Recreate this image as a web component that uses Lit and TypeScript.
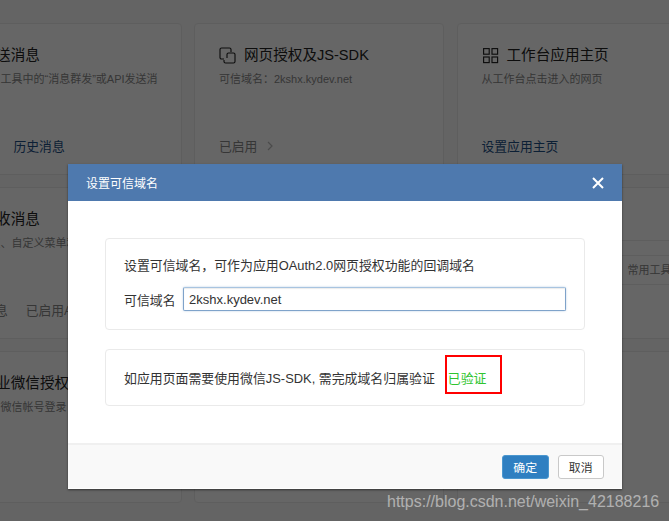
import { LitElement, html, css } from "lit";
import { customElement } from "lit/decorators.js";

const FONT = `"Liberation Sans", "Noto Sans CJK SC", sans-serif`;
const COMMA = "\uFF0C";
const COLON = "\uFF1A";

const iconLayers = html`<svg class="ico" viewBox="0 0 17 17" fill="none" stroke="currentColor" stroke-width="1.15">
  <path d="M5 12H2.500A1.500 1.500 0 0 1 1 10.500V2.500A1.500 1.500 0 0 1 2.500 1h8A1.500 1.500 0 0 1 12 2.500V5"/>
  <path d="M8 11V7.500A1.500 1.500 0 0 1 9.500 6h5A1.500 1.500 0 0 1 16 7.500v7a1.500 1.500 0 0 1-1.500 1.500h-8A1.500 1.500 0 0 1 5 14.500V13"/>
</svg>`;
const iconGrid = html`<svg class="ico" viewBox="0 0 17 17" fill="none" stroke="currentColor" stroke-width="1.15">
  <rect x="1.6" y="1.6" width="5.6" height="5.6"/><rect x="10" y="1.6" width="5.6" height="5.6"/>
  <rect x="1.6" y="10" width="5.6" height="5.6"/><rect x="10" y="10" width="5.6" height="5.6"/>
</svg>`;

@customElement("app-root")
export class AppRoot extends LitElement {
  static styles = css`
    :host { display: block; position: relative; width: 100%; height: 100vh; overflow: hidden; font-family: ${css([FONT] as any)}; background: #fafafa; color: #333; }
    .page { display: grid; grid-template-columns: repeat(3, 250px); column-gap: 12.5px; row-gap: 12px; grid-auto-rows: 152px; margin-left: -68.5px; padding-top: 23px; }
    .card { background: #fff; border: 1px solid #ececec; border-radius: 4px; box-sizing: border-box; padding: 21px 16px 0 24px; position: relative; display: flex; flex-direction: column; overflow: hidden; }
    .title { display: flex; align-items: center; gap: 8px; font-size: 14.6px; line-height: 20px; color: #222; white-space: nowrap; }
    .ico { width: 17px; height: 17px; flex: none; color: #222; }
    .desc { font-size: 11px; line-height: 17px; margin-top: 6px; color: #888; }
    .foot { margin-top: auto; margin-bottom: 18px; display: flex; gap: 18px; align-items: center; font-size: 12.8px; line-height: 18px; color: #888; white-space: nowrap; }
    .foot a { color: #1d4f86; }
    .foot a.hist { margin-left: 57px; }
    .foot svg { width: 6px; height: 10px; margin-left: 10px; color: #bbb; }
    .tools { position: absolute; left: 0; right: 0; top: 52px; }
    .tools .r1 { height: 14px; border-top: 1px solid #ececec; border-bottom: 1px solid #ececec; }
    .tools .r2 { height: 28px; border-bottom: 1px solid #ececec; padding-left: 170px; font-size: 11px; line-height: 28px; color: #888; white-space: nowrap; }
    .mask { position: absolute; inset: 0; background: rgba(0, 0, 0, 0.6); }
    .modal { position: absolute; left: 68px; top: 164px; width: 554px; height: 325px; background: #fff; display: flex; flex-direction: column; box-shadow: 0 1px 2px rgba(0,0,0,.5); }
    .head { height: 37px; flex: none; background: #4e79ae; color: #fff; display: flex; align-items: center; justify-content: space-between; padding: 0 18px; font-size: 12px; }
    .head svg { width: 12px; height: 12px; display: block; }
    .body { flex: 1; padding: 37px 37px 0; display: flex; flex-direction: column; gap: 19px; }
    .box { border: 1px solid #eaeaea; border-radius: 4px; box-sizing: border-box; padding: 0 18px; color: #333; font-size: 12.9px; }
    .box.one { height: 92px; padding-top: 18px; }
    .box.two { height: 57px; display: flex; align-items: center; white-space: nowrap; }
    .row { display: flex; align-items: center; gap: 7px; margin-top: 12px; white-space: nowrap; }
    .line { line-height: 18px; white-space: nowrap; }
    .input { flex: none; width: 383px; height: 24px; box-sizing: border-box; border: 1px solid #7fa3ca; border-top-color: #a8c4e0; border-radius: 2px; padding: 0 5.500px; font: 13px ${css([FONT] as any)}; color: #333; box-shadow: inset 0 1px 1px rgba(0,0,0,.08), 0 0 2px rgba(102,150,200,.5); outline: none; background: #fff; }
    .mark { border: 2px solid #f00; width: 57px; height: 39px; box-sizing: border-box; margin: -6px 0 0 10px; padding: 5px 0 0 1px; display: flex; align-items: center; color: #2fc52f; font-size: 12.9px; }
    .foot2 { height: 45px; flex: none; background: #f9f9f9; border-top: 2px solid #f0f0f0; margin-bottom: 1px; display: flex; justify-content: flex-end; align-items: center; gap: 9px; padding-right: 18px; box-sizing: border-box; }
    button { width: 46.5px; height: 24px; padding: 0; border-radius: 3px; font: 11.9px ${css([FONT] as any)}; box-sizing: border-box; }
    .ok { background: #2f7fc1; border: 1px solid #4b97cf; color: #fff; }
    .no { background: #fff; border: 1px solid #c9c9c9; color: #333; }
    .mark-wm { position: absolute; left: 387px; top: 493px; font-size: 16px; line-height: 18px; color: rgba(255, 255, 255, 0.5); white-space: nowrap; }
  `;

  render() {
    return html`
      <div class="page">
        <div class="card">
          <div class="title"><span class="ico"></span><span>发送消息</span></div>
          <div class="desc">使用常用工具中的“消息群发”或API发送消息</div>
          <div class="foot"><a class="hist">历史消息</a></div>
        </div>
        <div class="card">
          <div class="title">${iconLayers}<span>网页授权及JS-SDK</span></div>
          <div class="desc">可信域名${COLON}2kshx.kydev.net</div>
          <div class="foot"><span>已启用<svg viewBox="0 0 6 10" fill="none" stroke="currentColor" stroke-width="1.2"><path d="M1 1l4 4-4 4"/></svg></span></div>
        </div>
        <div class="card">
          <div class="title">${iconGrid}<span>工作台应用主页</span></div>
          <div class="desc">从工作台点击进入的网页</div>
          <div class="foot"><a>设置应用主页</a></div>
        </div>

        <div class="card">
          <div class="title"><span class="ico"></span><span>接收消息</span></div>
          <div class="desc">自动回复、自定义菜单和回调</div>
          <div class="foot"><span>历史消息</span><span>已启用API</span></div>
        </div>
        <div class="card"></div>
        <div class="card">
          <div class="tools"><div class="r1"></div><div class="r2">常用工具</div></div>
        </div>

        <div class="card">
          <div class="title"><span class="ico"></span><span>企业微信授权登录</span></div>
          <div class="desc">支持使用微信帐号登录</div>
        </div>
        <div class="card"></div>
        <div class="card"></div>
      </div>

      <div class="mask"></div>

      <div class="modal">
        <div class="head">
          <span>设置可信域名</span>
          <svg viewBox="0 0 12 12" fill="none" stroke="#fff" stroke-width="2"><path d="M1 1l10 10M11 1L1 11"/></svg>
        </div>
        <div class="body">
          <div class="box one">
            <div class="line">设置可信域名${COMMA}可作为应用OAuth2.0网页授权功能的回调域名</div>
            <div class="row"><span>可信域名</span><input class="input" .value=${"2kshx.kydev.net"} /></div>
          </div>
          <div class="box two">
            <span>如应用页面需要使用微信JS-SDK, 需完成域名归属验证</span>
            <span class="mark">已验证</span>
          </div>
        </div>
        <div class="foot2">
          <button class="ok">确定</button>
          <button class="no">取消</button>
        </div>
      </div>

      <div class="mark-wm">https://blog.csdn.net/weixin_42188216</div>
    `;
  }
}
